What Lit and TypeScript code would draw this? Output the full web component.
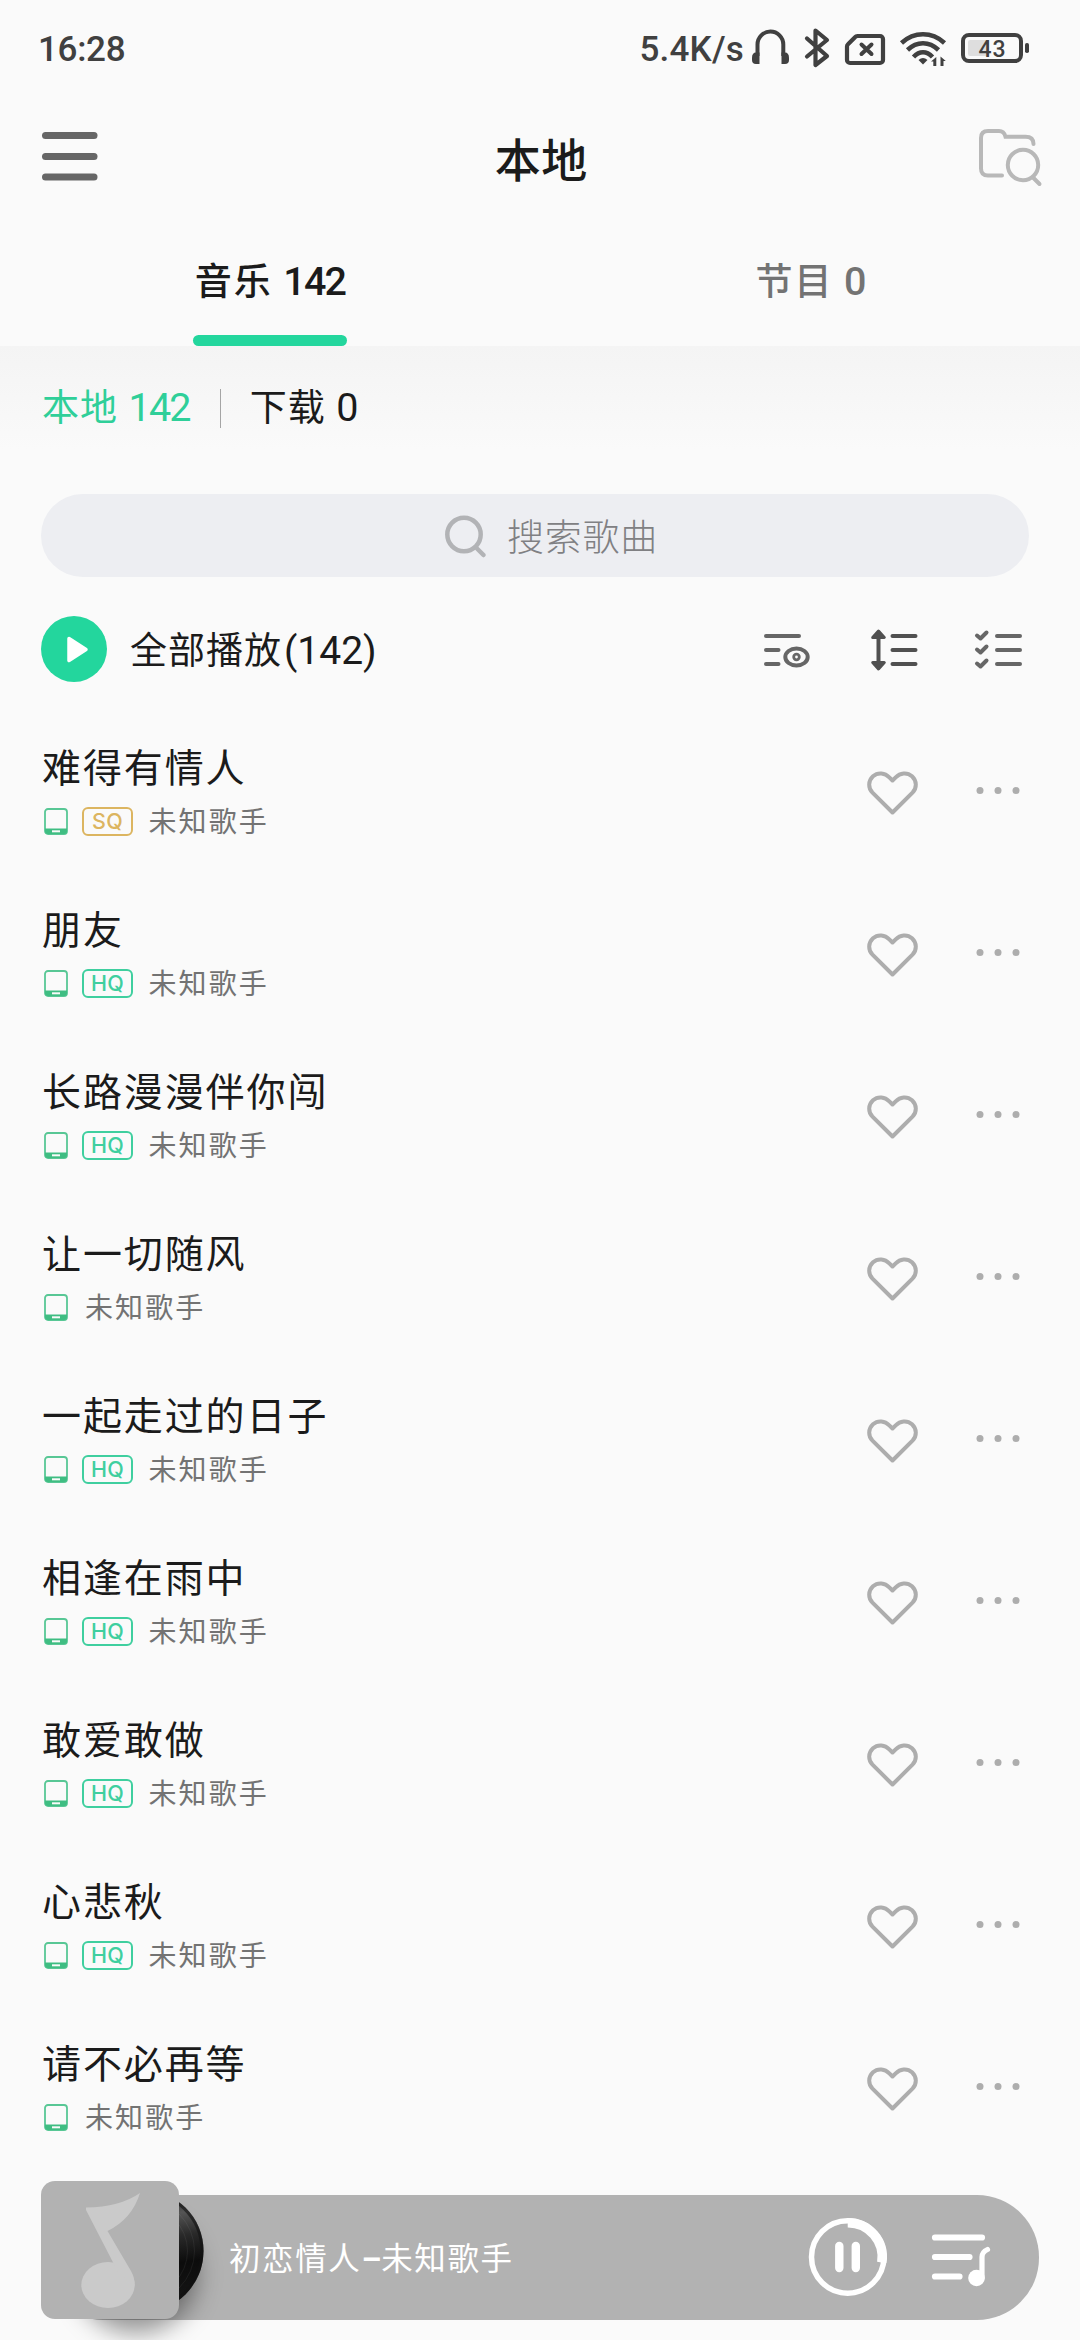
import { LitElement, html, css, svg, nothing } from "lit";
import { customElement, property } from "lit/decorators.js";

type Quality = "SQ" | "HQ" | "";

interface Song {
  title: string;
  artist: string;
  quality: Quality;
}

const SONGS: Song[] = [
  { title: "难得有情人", artist: "未知歌手", quality: "SQ" },
  { title: "朋友", artist: "未知歌手", quality: "HQ" },
  { title: "长路漫漫伴你闯", artist: "未知歌手", quality: "HQ" },
  { title: "让一切随风", artist: "未知歌手", quality: "" },
  { title: "一起走过的日子", artist: "未知歌手", quality: "HQ" },
  { title: "相逢在雨中", artist: "未知歌手", quality: "HQ" },
  { title: "敢爱敢做", artist: "未知歌手", quality: "HQ" },
  { title: "心悲秋", artist: "未知歌手", quality: "HQ" },
  { title: "请不必再等", artist: "未知歌手", quality: "" },
];

const base = css`
  :host {
    display: block;
    font-family: Roboto, "Noto Sans CJK SC", sans-serif;
  }
  * {
    box-sizing: border-box;
  }
  svg {
    display: block;
    flex: none;
    overflow: visible;
  }
`;

@customElement("status-bar")
class StatusBar extends LitElement {
  static styles = [
    base,
    css`
      .bar {
        display: flex;
        height: 98px;
        padding: 0 51px 0 38px;
        align-items: center;
        color: #404040;
        font-size: 35px;
        font-weight: 500;
      }
      .time {
        letter-spacing: -0.3px;
      }
      .speed {
        margin-left: auto;
        margin-right: 7px;
        letter-spacing: 0.2px;
      }
      .level {
        font-size: 23px;
        font-weight: 500;
        letter-spacing: 1px;
      }
    `,
  ];
  render() {
    return html`<div class="bar">
      <span class="time">16:28</span>
      <span class="speed">5.4K/s</span>
      <svg width="278" height="44" viewBox="751 27 278 44" fill="none" stroke="#404040" stroke-linecap="round" stroke-linejoin="round">
        <path d="M757.500 56V44.500a12.900 12.900 0 0 1 25.800 0V56" stroke-width="4" stroke-linecap="butt" />
        <path d="M752 58q0-5.500 4-5.500h3.500v11.500h-3.500q-4 0-4-4zM789 58q0-5.500-4-5.500h-3.500v11.500h3.500q4 0 4-4z" fill="#404040" stroke="none" />
        <path d="M807 38.500l20 17.500-11.500 9V30.500L827 40 807 56.500" stroke-width="4.200" />
        <path d="M857.500 36h22.500a3 3 0 0 1 3 3v21a3 3 0 0 1-3 3h-30a3 3 0 0 1-3-3V46.500a3 3 0 0 1 1-2.300l7-7a3.500 3.500 0 0 1 2.500-1.200z" stroke-width="4.200" />
        <path d="M861.500 44.500l10 9.500M871.500 44.500l-10 9.500" stroke-width="4" />
        <g stroke-width="4.600" stroke-linecap="butt">
          <path d="M901.500 43q9.500-8.700 21.500-8.700t21.500 8.700" />
          <path d="M907.500 50q7-6.700 15.500-6.700t15.500 6.700" />
          <path d="M913.500 57q4.500-4.700 9.500-4.700t9.500 4.700" />
        </g>
        <path d="M918.500 60q4.500-4 9 0l-4.500 4.500z" fill="#404040" stroke="none" />
        <path d="M931.500 61.500l5.300-4.500v9h-3v-4.500zM946.300 61l-5.300-4.500v9.500h3v-5z" fill="#404040" stroke="none" transform="translate(-.5 0)" />
        <rect x="963" y="35" width="58" height="26" rx="6" stroke-width="4" />
        <rect x="968" y="40" width="21" height="16" rx="2" fill="#dedede" stroke="none" />
        <rect x="1025" y="43" width="4" height="10" rx="1.800" fill="#404040" stroke="none" />
        <text class="level" x="978.500" y="57" fill="#404040" stroke="none">43</text>
      </svg>
    </div>`;
  }
}

@customElement("app-header")
class AppHeader extends LitElement {
  static styles = [
    base,
    css`
      .header {
        display: flex;
        height: 126px;
        padding: 0 38px 0 42px;
        align-items: center;
        justify-content: space-between;
      }
      .title {
        color: #1b1b1b;
        font-size: 46px;
        font-weight: 500;
        letter-spacing: 0.5px;
        line-height: 60px;
        margin-top: -1px;
        margin-right: 1px;
      }
      .menu {
        margin-top: -10px;
        margin-right: 6.5px;
      }
      .folder {
        margin-top: -6px;
      }
    `,
  ];
  render() {
    return html`<div class="header">
      <svg class="menu" width="56" height="49" viewBox="0 0 56 49" fill="#666">
        <rect width="55.500" height="7" rx="3.500" />
        <rect y="21" width="55.500" height="7" rx="3.500" />
        <rect y="41.500" width="55.500" height="7" rx="3.500" />
      </svg>
      <span class="title">本地</span>
      <svg class="folder" width="63" height="58" viewBox="979 129 63 58" fill="none" stroke="#b8b8b8" stroke-width="4" stroke-linecap="round">
        <path d="M1002 175.500h-14q-7 0-7-7V138q0-7 7-7h11q5 0 6.500 5.700h20q8 0 8 7.300" />
        <circle cx="1023" cy="165" r="15.200" />
        <path d="M1033.500 178l6 6" />
      </svg>
    </div>`;
  }
}

@customElement("tab-strip")
class TabStrip extends LitElement {
  static styles = [
    base,
    css`
      .tabs {
        display: grid;
        grid-template-columns: 1fr 1fr;
        height: 122px;
      }
      .tab {
        display: flex;
        flex-direction: column;
        align-items: center;
        justify-content: space-between;
        padding-top: 32px;
        color: #737373;
        font-size: 37px;
        font-weight: 500;
        line-height: 52px;
        letter-spacing: 2px;
        white-space: nowrap;
      }
      .active {
        color: #1b1b1b;
      }
      .num {
        font-size: 39.5px;
        letter-spacing: -1.8px;
        margin-left: 2.5px;
      }
      .mark {
        width: 154px;
        height: 11px;
        border-radius: 5.500px;
        background: #23d69d;
      }
      .filters {
        display: flex;
        height: 104px;
        padding: 20px 42px 0;
        align-items: center;
        background: linear-gradient(#f4f4f4, #fafafa);
        color: #1b1b1b;
        font-size: 37px;
        letter-spacing: 1px;
        line-height: 52px;
      }
      .sep {
        width: 1px;
        height: 39px;
        margin: 0 29px 0 30px;
        background: #a5a5a5;
      }
      .local {
        color: #2fcf99;
      }
    `,
  ];
  render() {
    return html`<div class="tabs">
        <div class="tab active">
          <span>音乐<span class="num"> 142</span></span>
          <div class="mark"></div>
        </div>
        <div class="tab"><span>节目<span class="num"> 0</span></span></div>
      </div>
      <div class="filters">
        <span class="local">本地<span class="num"> 142</span></span>
        <div class="sep"></div>
        <span>下载<span class="num"> 0</span></span>
      </div>`;
  }
}

@customElement("search-box")
class SearchBox extends LitElement {
  static styles = [
    base,
    css`
      .box {
        display: flex;
        height: 83px;
        margin: 44px 51px 0 41px;
        border-radius: 41.500px;
        align-items: center;
        justify-content: center;
        gap: 20px;
        background: #edeef2;
      }
      .hint {
        color: #808083;
        font-size: 37px;
        font-weight: 300;
        letter-spacing: 0.800px;
        line-height: 52px;
        margin-top: 7px;
        margin-right: -33px;
      }
    `,
  ];
  render() {
    return html`<div class="box">
      <svg width="42" height="42" viewBox="445 514 42 42" fill="none" stroke="#b2b3b6" stroke-width="4.500" stroke-linecap="round">
        <circle cx="464" cy="533.500" r="16.700" />
        <path d="M477 547.500l6.500 6.500" />
      </svg>
      <span class="hint">搜索歌曲</span>
    </div>`;
  }
}

@customElement("play-all-bar")
class PlayAllBar extends LitElement {
  static styles = [
    base,
    css`
      .row {
        display: flex;
        height: 66px;
        margin-top: 39px;
        padding: 0 58px 0 41px;
        align-items: center;
      }
      .label {
        margin-left: 23px;
        margin-top: 4px;
        color: #1b1b1b;
        font-size: 37px;
        letter-spacing: 1px;
        line-height: 52px;
      }
      .num {
        font-size: 39px;
        letter-spacing: 0;
        margin-left: 2px;
      }
      .tools {
        display: flex;
        gap: 57.500px;
        margin-left: auto;
        margin-top: 2px;
      }
      .eye {
        margin-right: 3px;
      }
    `,
  ];
  render() {
    const lines = (x: number) => svg`<path d=${`M${x} 636h23M${x} 650h23M${x} 664h23`} />`;
    return html`<div class="row">
      <svg width="66" height="66" viewBox="0 0 66 66">
        <circle cx="33" cy="33" r="33" fill="#23d69d" />
        <path d="M28 22.500L45 33.500 28 44.500z" fill="#fff" stroke="#fff" stroke-width="3.500" stroke-linejoin="round" />
      </svg>
      <span class="label">全部播放<span class="num">(142)</span></span>
      <div class="tools">
        <svg class="eye" width="46" height="42" viewBox="764 629 46 42" fill="none" stroke="#666" stroke-width="4" stroke-linecap="round">
          <path d="M766 636h33M766 650h12.500M766 664h12.500" />
          <ellipse cx="796.500" cy="657" rx="11.200" ry="8.500" />
          <circle cx="796.500" cy="657" r="2.800" stroke-width="2.800" />
        </svg>
        <svg width="47" height="42" viewBox="870.500 629 47 42" fill="none" stroke="#505050" stroke-width="4" stroke-linecap="round">
          <path d="M878 636v28" />
          <path d="M878 631l5.800 6.500h-11.600zM878 669l5.800-6.500h-11.600z" fill="#505050" stroke-width="3" stroke-linejoin="round" />
          ${lines(892)}
        </svg>
        <svg width="47" height="42" viewBox="975 629 47 42" fill="none" stroke="#666" stroke-width="4" stroke-linecap="round">
          ${lines(997)}
          <path d="M977 635.500l3.500 3 6-6M977 649.500l3.500 3 6-6M977 663.500l3.500 3 6-6" stroke-linejoin="round" />
        </svg>
      </div>
    </div>`;
  }
}

@customElement("song-row")
class SongRow extends LitElement {
  @property({ attribute: false }) song!: Song;

  static styles = [
    base,
    css`
      .row {
        display: flex;
        height: 162px;
        padding: 0 60px 0 42px;
      }
      .info {
        flex: 1;
        padding-top: 17px;
      }
      .title {
        color: #1b1b1b;
        font-size: 39px;
        letter-spacing: 1.900px;
        line-height: 56px;
        height: 56px;
      }
      .meta {
        display: flex;
        align-items: center;
        height: 30px;
        margin-top: 9.500px;
        padding-left: 2px;
      }
      .badge {
        width: 51px;
        height: 29px;
        margin-left: 14px;
        margin-right: -1.500px;
        border: 2px solid #3fcf9f;
        border-radius: 6px;
        color: #3fcf9f;
        font-family: Inter, "Liberation Sans", sans-serif;
        font-size: 21.500px;
        font-weight: 500;
        letter-spacing: 0.300px;
        line-height: 25px;
        text-align: center;
      }
      .sq {
        border-color: #dcb560;
        color: #dcb560;
      }
      .artist {
        margin-left: 17px;
        margin-top: 2px;
        color: #737373;
        font-size: 28px;
        letter-spacing: 2.100px;
        line-height: 40px;
      }
      .actions {
        display: flex;
        gap: 58px;
        height: 44px;
        margin-top: 47px;
        align-items: center;
      }
      .dots {
        margin-top: -4px;
      }
    `,
  ];
  render() {
    const { title, artist, quality } = this.song;
    return html`<div class="row">
      <div class="info">
        <div class="title">${title}</div>
        <div class="meta">
          <svg width="24" height="27" viewBox="0 0 24 27">
            <rect x="1" y="1" width="22" height="25" rx="3" fill="none" stroke="#58c795" stroke-width="1.800" />
            <path d="M1 20.500h22V23q0 3-3 3H4q-3 0-3-3z" fill="#3fbd82" />
            <rect x="8" y="22.300" width="8" height="2" fill="#fafafa" />
          </svg>
          ${quality ? html`<span class="badge ${quality === "SQ" ? "sq" : ""}">${quality}</span>` : nothing}
          <span class="artist">${artist}</span>
        </div>
      </div>
      <div class="actions">
        <svg width="51" height="44" viewBox="0 0 51 44" fill="none" stroke="#adadad" stroke-width="4" stroke-linejoin="round">
          <path d="M25.500 9.500l-3.200-3.200C18 1.900 11 .8 6 5.300 1 10 1 17 5.500 21.700L25.500 41.500 45.500 21.700C50 17 50 10 45 5.300 40 .8 33 1.900 28.700 6.300z" />
        </svg>
        <svg class="dots" width="44" height="8" viewBox="0 0 44 8" fill="#adadad">
          <circle cx="4" cy="3.500" r="3.500" />
          <circle cx="22" cy="3.500" r="3.500" />
          <circle cx="40" cy="3.500" r="3.500" />
        </svg>
      </div>
    </div>`;
  }
}

@customElement("mini-player")
class MiniPlayer extends LitElement {
  static styles = [
    base,
    css`
      .player {
        position: relative;
        height: 138px;
        padding: 14px 41px 0 41px;
      }
      .bar {
        display: flex;
        height: 124.500px;
        padding-left: 188px;
        padding-right: 48px;
        border-radius: 62px;
        background: #b2b2b2;
        align-items: center;
      }
      .art {
        position: absolute;
        left: 41px;
        top: 0;
      }
      .shade {
        position: absolute;
        left: 75px;
        top: 34px;
        width: 122px;
        height: 118px;
        border-radius: 50%;
        background: rgba(0, 0, 0, 0.4);
        filter: blur(12px);
      }
      .track {
        flex: 1;
        color: #fff;
        font-size: 31.500px;
        letter-spacing: 1.600px;
        line-height: 44px;
        margin-top: 5px;
      }
      .dash {
        font-weight: 700;
        letter-spacing: 0;
      }
    `,
  ];
  render() {
    return html`<div class="player">
      <div class="bar">
        <span class="track">初恋情人<span class="dash">–</span>未知歌手</span>
        <svg width="183" height="80" viewBox="808 2217 183 80" fill="none" stroke="#fff" stroke-linecap="round">
          <circle cx="847.700" cy="2257" r="36.200" stroke-width="5.500" />
          <path d="M847.700 2222.700A34.300 34.300 0 0 1 881.800 2262.500" stroke-width="9.500" stroke-linecap="butt" />
          <path d="M839.300 2246v22M855.800 2246v22" stroke-width="8.400" />
          <path d="M935 2237.500h47M935 2257h34.500M935 2276.500h24.500" stroke-width="6.200" />
          <path d="M982 2278v-21q0-5 5.500-7.500" stroke-width="5.200" />
          <circle cx="976.500" cy="2278" r="8.300" fill="#fff" stroke="none" />
        </svg>
      </div>
      <div class="shade"></div>
      <svg class="art" width="163" height="138" viewBox="41 2181 163 138">
        <defs>
          <linearGradient id="vinyl" x1="0" y1="0" x2="0.150" y2="1">
            <stop offset="0.100" stop-color="#222" />
            <stop offset="0.300" stop-color="#555" />
            <stop offset="0.480" stop-color="#2a2a2a" />
            <stop offset="0.700" stop-color="#0c0c0c" />
            <stop offset="1" stop-color="#151515" />
          </linearGradient>
        </defs>
        <circle cx="142.500" cy="2251" r="61" fill="url(#vinyl)" />
        <circle cx="142.500" cy="2251" r="59.500" fill="none" stroke="#111" stroke-opacity="0.600" stroke-width="3" />
        <circle cx="142.500" cy="2251" r="52" fill="none" stroke="#fff" stroke-opacity="0.060" />
        <circle cx="142.500" cy="2251" r="45" fill="none" stroke="#fff" stroke-opacity="0.060" />
        <rect x="41" y="2181" width="138" height="138" rx="14" fill="#b2b2b2" />
        <g fill="#cacaca">
          <ellipse cx="108" cy="2285" rx="26.700" ry="23" />
          <path d="M86 2207.500Q120 2207 140 2193Q132 2219 107.500 2231L131 2271Q135 2278 134.600 2286L118 2272L86 2210Z" />
        </g>
      </svg>
    </div>`;
  }
}

@customElement("app-root")
class AppRoot extends LitElement {
  static styles = [
    base,
    css`
      .page {
        display: flex;
        flex-direction: column;
        height: 2340px;
        background: #fafafa;
        overflow: hidden;
      }
      .list {
        display: flex;
        flex-direction: column;
        margin-top: 42px;
        height: 1457px;
        flex: none;
      }
    `,
  ];
  render() {
    return html`<div class="page">
      <status-bar></status-bar>
      <app-header></app-header>
      <tab-strip></tab-strip>
      <search-box></search-box>
      <play-all-bar></play-all-bar>
      <div class="list">${SONGS.map((song) => html`<song-row .song=${song}></song-row>`)}</div>
      <mini-player></mini-player>
    </div>`;
  }
}
